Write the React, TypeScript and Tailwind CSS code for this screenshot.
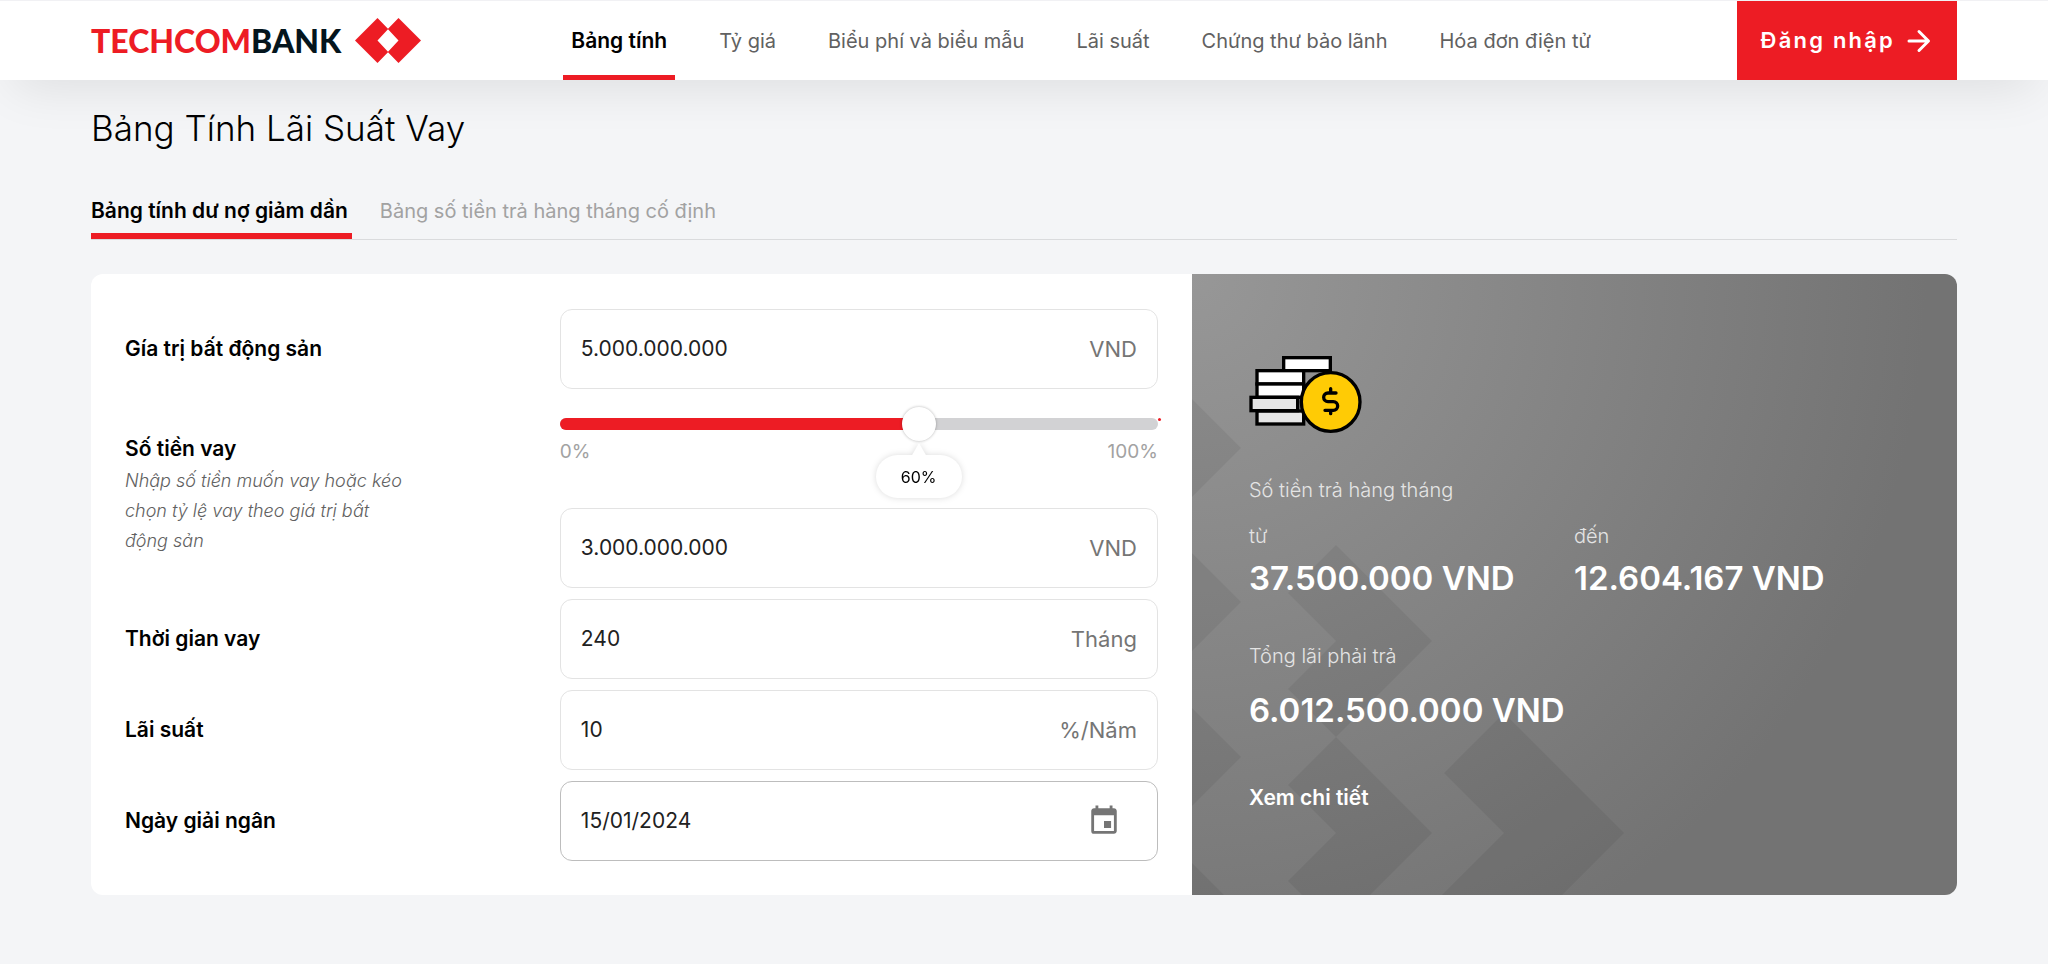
import { useState } from "react";
import type { ReactNode } from "react";
import { MdEvent } from "react-icons/md";

const navItems = [
  "Bảng tính",
  "Tỷ giá",
  "Biểu phí và biểu mẫu",
  "Lãi suất",
  "Chứng thư bảo lãnh",
  "Hóa đơn điện tử",
];

const fieldBox = "flex h-20 items-center rounded-xl border bg-white px-5";
const fieldInput = "min-w-0 flex-1 bg-transparent text-[21px] leading-8 text-[#212121] outline-none";
const rowLabel = "text-[21px] leading-[30px] font-semibold text-black";

function Logo() {
  return (
    <a href="#" aria-label="Techcombank" className="mr-[142px] flex shrink-0 items-center gap-[14px]">
      <span className="font-[Lato,sans-serif] text-[32px] leading-none font-black text-[#ed1c24]">
        TECHCOM<span className="text-[#04151d]">BANK</span>
      </span>
      <svg viewBox="0 0 66 45" className="h-[45px] w-[66px]" fill="#ed1c24" aria-hidden="true">
        <path d="M0 22.5 22.5 0 33.2 11 22.5 22.5 33.2 34 22.5 45Z" />
        <path d="M66 22.5 43.5 0 32.8 11 43.5 22.5 32.8 34 43.5 45Z" />
      </svg>
    </a>
  );
}

function Header() {
  return (
    <header className="relative z-10 border-t border-[#f1f1f4] bg-white px-[91px] shadow-[0_20px_50px_-14px_rgba(0,0,0,0.1)]">
      <div className="flex h-[79px] items-stretch">
        <Logo />
        <nav className="flex items-stretch gap-9">
          {navItems.map((item, i) => (
            <a
              key={item}
              href="#"
              aria-current={i === 0 ? "page" : undefined}
              className={
                i === 0
                  ? "flex items-center border-b-5 border-[#ed1c24] px-2 pt-1.5 text-[21px] font-semibold whitespace-nowrap text-black"
                  : "flex items-center border-b-5 border-transparent px-2 pt-1.5 text-xl whitespace-nowrap text-[#616161]"
              }
            >
              {item}
            </a>
          ))}
        </nav>
        <button
          type="button"
          className="ml-auto flex shrink-0 items-center gap-3 bg-[#ed1c24] pr-[26px] pl-6 text-[22px] font-semibold tracking-widest text-white"
        >
          Đăng nhập
          <svg viewBox="0 0 24 24" className="size-6" fill="none" stroke="currentColor" strokeWidth="3" aria-hidden="true">
            <path d="M2 12H21M12 2.5 21.5 12 12 21.5" strokeLinejoin="round" strokeLinecap="round" />
          </svg>
        </button>
      </div>
    </header>
  );
}

function Field({ id, unit, value }: { id: string; unit: string; value: string }) {
  return (
    <div className={`${fieldBox} border-[#e3e3e3]`}>
      <input id={id} defaultValue={value} className={fieldInput} />
      <span className="text-[22px] leading-8 text-[#757575]">{unit}</span>
    </div>
  );
}

function Row({ label, children }: { label: ReactNode; children: ReactNode }) {
  return (
    <div className="grid grid-cols-[42.1%_57.9%] items-center">
      <div>{label}</div>
      <div>{children}</div>
    </div>
  );
}

function RatioSlider() {
  const [ratio, setRatio] = useState(60);
  return (
    <div className="relative mt-[18px] mb-[78px]">
      <div className="h-3 overflow-hidden rounded-full bg-[#d2d2d4]">
        <div className="h-full bg-[#ed1c24]" style={{ width: `${ratio}%` }} />
      </div>
      <span className="absolute top-0 -right-[3px] size-[3px] rounded-full bg-[#ed1c24]" />
      <input
        type="range"
        min={0}
        max={100}
        value={ratio}
        aria-label="Tỷ lệ vay"
        onChange={(e) => setRatio(Number(e.target.value))}
        className="absolute -top-[11px] -left-[17px] h-[34px] w-[calc(100%+34px)] cursor-pointer appearance-none bg-transparent outline-none [&::-webkit-slider-thumb]:size-[34px] [&::-webkit-slider-thumb]:appearance-none [&::-webkit-slider-thumb]:rounded-full [&::-webkit-slider-thumb]:bg-white [&::-webkit-slider-thumb]:shadow-[0_0_3px_rgba(0,0,0,0.3)]"
      />
      <div className="absolute top-[18px] flex w-full justify-between text-[19px] leading-8 text-[#a2a2a2]">
        <span>0%</span>
        <span>100%</span>
      </div>
      <output
        className="absolute top-[37px] flex h-[43px] w-[86px] -translate-x-1/2 items-center justify-center rounded-full bg-white text-base text-black drop-shadow-[0_0_3px_rgba(0,0,0,0.14)]"
        style={{ left: `${ratio}%` }}
      >
        <svg viewBox="0 0 16 14" className="absolute -top-3 h-[14px] w-4" fill="#fff" aria-hidden="true">
          <path d="M8 0 16 14H0Z" />
        </svg>
        {ratio}%
      </output>
    </div>
  );
}

function LoanForm() {
  return (
    <form className="flex w-[59%] flex-col gap-[11px] bg-white px-[34px] pt-[35px] pb-[34px]">
      <Row label={<label htmlFor="value" className={rowLabel}>Gía trị bất động sản</label>}>
        <Field id="value" unit="VND" value="5.000.000.000" />
      </Row>
      <Row
        label={
          <div className="pt-0.5">
            <label htmlFor="amount" className={rowLabel}>Số tiền vay</label>
            <p className="mt-0.5 w-[284px] text-lg leading-[30px] font-light text-[#616161] italic">
              Nhập số tiền muốn vay hoặc kéo chọn tỷ lệ vay theo giá trị bất động sản
            </p>
          </div>
        }
      >
        <RatioSlider />
        <Field id="amount" unit="VND" value="3.000.000.000" />
      </Row>
      <Row label={<label htmlFor="term" className={rowLabel}>Thời gian vay</label>}>
        <Field id="term" unit="Tháng" value="240" />
      </Row>
      <Row label={<label htmlFor="rate" className={rowLabel}>Lãi suất</label>}>
        <Field id="rate" unit="%/Năm" value="10" />
      </Row>
      <Row label={<label htmlFor="date" className={rowLabel}>Ngày giải ngân</label>}>
        <div className={`${fieldBox} border-[#bdbdbd]`}>
          <input id="date" defaultValue="15/01/2024" className={fieldInput} />
          <button type="button" aria-label="Chọn ngày" className="mr-4 text-[#757575]">
            <MdEvent className="size-[34px]" />
          </button>
        </div>
      </Row>
    </form>
  );
}

function MoneyIcon() {
  return (
    <svg viewBox="207 255 339 237" className="h-[79px] w-[113px]" stroke="#000" strokeWidth="10" fill="#fff" aria-hidden="true">
      <rect x="311" y="263" width="140" height="39" />
      <rect x="231" y="302" width="140" height="40" />
      <rect x="231" y="342" width="140" height="40" />
      <rect x="231" y="423" width="140" height="39" fill="#e6e6e6" />
      <rect x="213" y="382" width="140" height="40" fill="#e6e6e6" />
      <circle cx="452" cy="396" r="88" fill="#ffcb05" />
      <g fill="none" strokeLinecap="round">
        <path d="M468 369H444A13 13 0 0 0 444 395H460A13 13 0 0 1 460 421H435" />
        <path d="M452 356V367M452 423V431" />
      </g>
    </svg>
  );
}

function PanelPattern() {
  return (
    <svg viewBox="0 0 440 620" className="absolute bottom-0 left-0 h-[620px] w-[440px]" fill="#000" fillOpacity="0.06" aria-hidden="true">
      <path d="M0 124 49 173 0 222Z" />
      <path d="M0 278 49 327 0 376Z" />
      <path d="M0 433 49 482 0 531Z" />
      <path d="M0 588 32 620H0Z" />
      <path d="M144 270 240 366 144 462 96 414 144 366 96 318Z" />
      <path d="M144 462 240 558 178 620H110L96 606 144 558 96 510Z" />
      <path d="M312 438 432 558 370 620H250L312 558 252 498Z" />
    </svg>
  );
}

function Amount({ caption, value }: { caption: string; value: string }) {
  return (
    <div className="w-[325px]">
      <p className="text-xl leading-8 font-light text-[#e4e4e4]">{caption}</p>
      <p className="mt-0.5 text-[33px] leading-12 font-semibold whitespace-nowrap text-white">{value}</p>
    </div>
  );
}

function ResultPanel() {
  return (
    <section className="relative w-[41%] overflow-hidden bg-[radial-gradient(ellipse_96%_122%_at_top_left,#979797,#737373)] px-[57px] pt-[81px]">
      <PanelPattern />
      <div className="relative">
        <MoneyIcon />
        <p className="mt-10 text-xl leading-8 font-light text-[#e4e4e4]">Số tiền trả hàng tháng</p>
        <div className="mt-[14px] flex">
          <Amount caption="từ" value="37.500.000 VND" />
          <Amount caption="đến" value="12.604.167 VND" />
        </div>
        <p className="mt-[38px] text-xl leading-8 font-light text-[#e4e4e4]">Tổng lãi phải trả</p>
        <p className="mt-[14px] text-[33px] leading-12 font-semibold text-white">6.012.500.000 VND</p>
        <a href="#" className="mt-12 block text-[21px] leading-8 font-semibold text-white">Xem chi tiết</a>
      </div>
    </section>
  );
}

export default function App() {
  return (
    <div className="bg-white font-[Inter,'Noto_Sans',sans-serif]">
      <Header />
      <main className="bg-[#f4f5f7] px-[91px] pt-6 pb-[69px]">
        <h1 className="relative z-20 text-[35px] leading-12 font-light text-black">Bảng Tính Lãi Suất Vay</h1>
        <div role="tablist" className="mt-[35px] flex gap-7 border-b border-[#dadbdd]">
          <button
            type="button"
            role="tab"
            aria-selected="true"
            className="border-b-6 border-[#ed1c24] pt-1 pr-1 pb-0.5 text-[21px] leading-10 font-semibold text-black"
          >
            Bảng tính dư nợ giảm dần
          </button>
          <button
            type="button"
            role="tab"
            aria-selected="false"
            className="border-b-6 border-transparent pt-1 pb-0.5 text-xl leading-10 text-[#a2a2a2]"
          >
            Bảng số tiền trả hàng tháng cố định
          </button>
        </div>
        <div className="mt-[34px] flex overflow-hidden rounded-xl">
          <LoanForm />
          <ResultPanel />
        </div>
      </main>
    </div>
  );
}
